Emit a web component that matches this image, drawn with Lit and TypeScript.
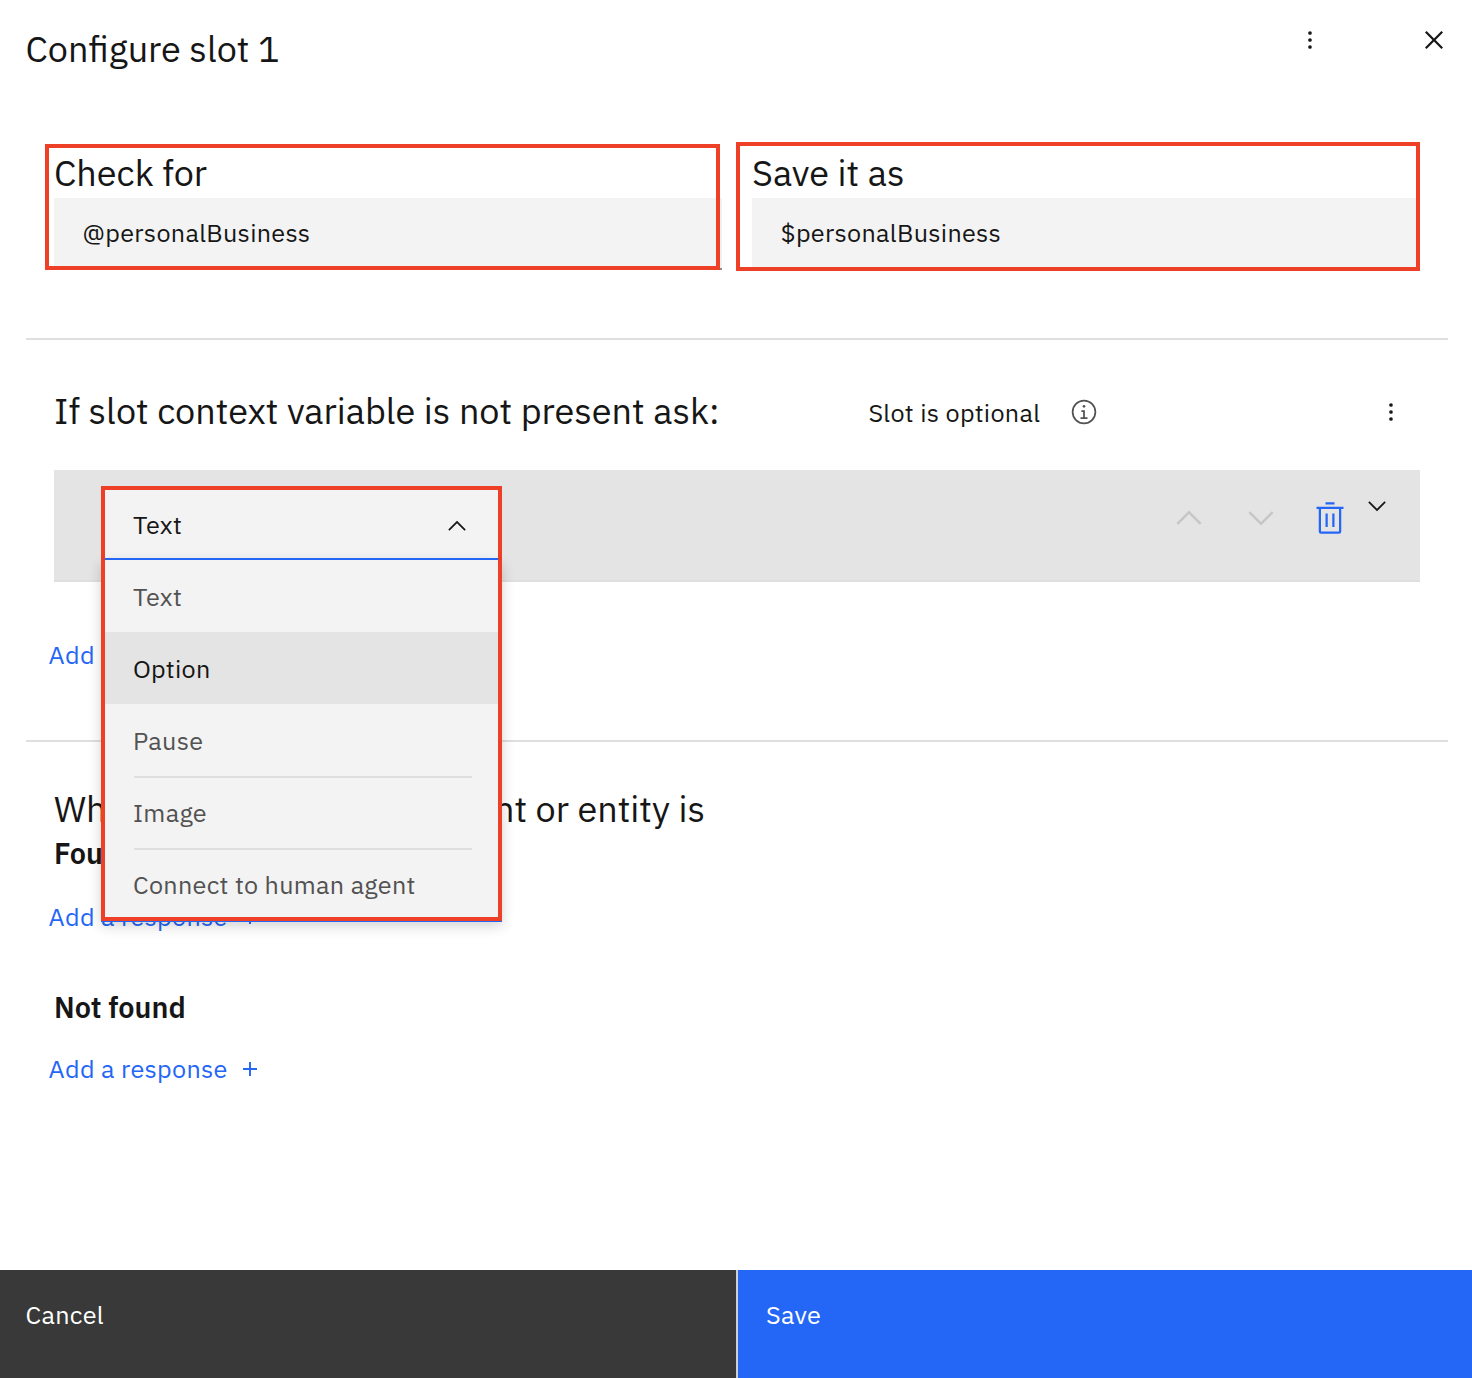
import { LitElement, html, css, svg } from "lit";
import { customElement, property } from "lit/decorators.js";
import { classMap } from "lit/directives/class-map.js";

const overflowIcon = svg`<svg class="icon" width="28" height="28" viewBox="0 0 32 32">
  <circle cx="16" cy="8" r="2.1"></circle><circle cx="16" cy="16" r="2.1"></circle><circle cx="16" cy="24" r="2.1"></circle>
</svg>`;

const closeIcon = svg`<svg class="icon" width="36" height="36" viewBox="0 0 32 32">
  <path d="M24 9.4L22.6 8 16 14.6 9.4 8 8 9.4 14.6 16 8 22.6 9.4 24 16 17.4 22.6 24 24 22.6 17.4 16z"></path>
</svg>`;

const infoIcon = svg`<svg class="icon info" width="28" height="28" viewBox="0 0 32 32">
  <path d="M17 22L17 14 13 14 13 16 15 16 15 22 12 22 12 24 20 24 20 22 17 22z"></path>
  <circle cx="16" cy="9.5" r="1.5"></circle>
  <path d="M16 30A14 14 0 1 1 30 16 14 14 0 0 1 16 30ZM16 4A12 12 0 1 0 28 16 12 12 0 0 0 16 4Z"></path>
</svg>`;

const trashIcon = svg`<svg class="icon trash" width="36" height="36" viewBox="0 0 32 32">
  <path d="M12 12H14V24H12zM18 12H20V24H18z"></path>
  <path d="M4 6V8H6V28a2 2 0 0 0 2 2H24a2 2 0 0 0 2-2V8h2V6zM8 28V8H24V28zM12 2H20V4H12z"></path>
</svg>`;

const chevronUp = (size: number) => svg`<svg class="icon" width=${size} height=${size} viewBox="0 0 32 32">
  <path d="M16 10L26 20 24.6 21.4 16 12.8 7.4 21.4 6 20z"></path>
</svg>`;

const chevronDown = (size: number) => svg`<svg class="icon" width=${size} height=${size} viewBox="0 0 32 32">
  <path d="M16 22L6 12 7.4 10.6 16 19.2 24.6 10.6 26 12z"></path>
</svg>`;

const plusIcon = svg`<svg class="icon" width="28" height="28" viewBox="0 0 32 32">
  <path d="M17.1 14.9V8H14.9V14.9H8V17.1H14.9V24H17.1V17.1H24V14.9z"></path>
</svg>`;

@customElement("slot-field")
export class SlotField extends LitElement {
  @property() label = "";
  @property() value = "";

  static styles = css`
    :host { display: block; }
    .label { font-size: 36px; line-height: 48px; padding-bottom: 1px; }
    .input {
      box-sizing: border-box; height: 72px; padding: 0 28.6px 2px; display: flex; align-items: center;
      background: #f3f3f3; border-bottom: 2px solid #8d8d8d;
      font-size: 25.2px; letter-spacing: 0.288px;
    }
  `;

  render() {
    return html`<div class="label">${this.label}</div><div class="input">${this.value}</div>`;
  }
}

@customElement("response-type-menu")
export class ResponseTypeMenu extends LitElement {
  options = [
    { name: "Text", active: false, rule: false },
    { name: "Option", active: true, rule: false },
    { name: "Pause", active: false, rule: false },
    { name: "Image", active: false, rule: true },
    { name: "Connect to human agent", active: false, rule: true },
  ];

  static styles = css`
    :host {
      display: block; box-sizing: border-box; width: 401px; height: 436px;
      background: #f3f3f3; border: 4px solid #ee4026; border-bottom: 0;
      font-size: 25.2px; letter-spacing: 0.288px;
    }
    .trigger {
      box-sizing: border-box; height: 70px; padding: 0 27px 0 28px;
      display: flex; align-items: center; justify-content: space-between;
      border-bottom: 2px solid #2466f6;
    }
    .icon { display: block; fill: #161616; margin-top: 3px; }
    .list { height: 357px; background: #f3f3f3; }
    .shadow {
      position: absolute; left: -4px; right: -4px; top: 70px; bottom: 0; z-index: -1;
      box-shadow: 0 4px 12px rgba(0, 0, 0, 0.18);
    }
    .option {
      box-sizing: border-box; height: 72px; padding: 0 26px 0 28px; color: #525252;
    }
    .option.last { height: 69px; }
    .text { box-sizing: border-box; height: 72px; line-height: 73px; border-top: 0 solid #dedede; }
    .ruled .text { border-top-width: 2px; line-height: 69px; margin-left: 1px; text-indent: -1px; }
    .active { background: #e4e4e4; color: #161616; }
    .edge { height: 4px; margin: 0 -4px; background: #ee4026; border-bottom: 1px solid #2466f6; }
  `;

  render() {
    return html`
      <div class="shadow"></div>
      <div class="trigger"><span>Text</span>${chevronUp(28)}</div>
      <div class="list">
        ${this.options.map((o, i) => html`
          <div class=${classMap({ option: true, active: o.active, ruled: o.rule, last: i === this.options.length - 1 })}>
            <div class="text">${o.name}</div>
          </div>`)}
      </div>
      <div class="edge"></div>
    `;
  }
}

@customElement("app-root")
export class AppRoot extends LitElement {
  static styles = css`
    :host {
      display: flex; flex-direction: column; width: 1472px; height: 1378px; overflow: hidden;
      background: #fff; color: #161616;
      font-family: "IBM Plex Sans", Roboto, "Open Sans", sans-serif;
      font-size: 25.2px; letter-spacing: 0.288px;
    }
    .icon { display: block; fill: #161616; }
    .top { height: 149px; padding: 0 20px 0 25.4px; box-sizing: border-box; display: flex; align-items: flex-start; }
    .title { flex: 1; padding-top: 25px; }
    .heading { font-size: 36px; line-height: 48px; letter-spacing: 0; font-weight: 400; margin: 0; white-space: nowrap; }
    .tools { display: flex; align-items: center; gap: 92px; padding-top: 22px; }
    .fields { display: grid; grid-template-columns: 668px 668px; gap: 30px; padding-left: 54px; height: 189px; letter-spacing: 0; }
    .field { position: relative; height: 121px; }
    .mark { position: absolute; box-sizing: border-box; border: 4px solid #ee4026; }
    .mark.left { left: -9px; top: -5px; width: 675px; height: 126px; }
    .mark.right { left: -16px; top: -7px; width: 684px; height: 129px; }
    .rule { height: 2px; margin: 0 24px 0 26px; background: #dfdfdf; }
    .ask { display: flex; align-items: center; height: 130px; padding: 14px 67px 0 54px; box-sizing: border-box; }
    .ask .heading { width: 814.4px; margin-top: -3px; }
    .optional { padding-top: 1px; }
    .ask .info { margin-left: 29.5px; fill: #525252; }
    .ask .more { margin: 0 0 0 auto; }
    .response {
      position: relative; box-sizing: border-box; height: 112px; margin: 0 52px 0 54px; padding: 30px 29px 0 0;
      display: flex; justify-content: flex-end; align-items: flex-start;
      background: #e4e4e4; border-bottom: 2px solid #dfdfdf;
    }
    .move { display: flex; gap: 32px; margin: -2px 31px 0 0; }
    .move .icon { fill: #c6c6c6; }
    .trash { fill: #2466f6; }
    .expand { margin: -8px 0 0 15px; }
    response-type-menu { position: absolute; left: 47px; top: 16px; z-index: 2; }
    .link { display: flex; align-items: center; gap: 8px; height: 36px; padding-left: 48.6px; color: #2466f6; }
    .link .icon { fill: #2466f6; margin-top: 2px; }
    .variation { padding: 54px 0 68px; }
    .when { padding: 43px 0 0 54px; display: flex; }
    .lead { width: 440px; }
    .sub { margin: 0; padding-left: 54px; font-size: 28.8px; line-height: 40px; font-weight: 600; letter-spacing: 0; }
    .found { padding-bottom: 25px; }
    .missing { padding-top: 53px; padding-bottom: 23px; }
    .actions { margin-top: auto; display: grid; grid-template-columns: 736px 734px; gap: 2px; height: 108px; background: #cfcfcf; color: #fff; }
    .action { padding: 26px 25.6px 0; line-height: 38px; }
    .cancel { background: #393939; }
    .save { background: #2466f6; padding-left: 28px; }
  `;

  render() {
    return html`
      <div class="top">
        <div class="title"><h1 class="heading">Configure slot 1</h1></div>
        <div class="tools">${overflowIcon}${closeIcon}</div>
      </div>
      <div class="fields">
        <div class="field">
          <slot-field label="Check for" value="@personalBusiness"></slot-field>
          <div class="mark left"></div>
        </div>
        <div class="field">
          <slot-field label="Save it as" value="$personalBusiness"></slot-field>
          <div class="mark right"></div>
        </div>
      </div>
      <div class="rule"></div>
      <div class="ask">
        <h2 class="heading">If slot context variable is not present ask:</h2>
        <span class="optional">Slot is optional</span>
        ${infoIcon}
        <div class="more">${overflowIcon}</div>
      </div>
      <div class="response">
        <div class="move">${chevronUp(40)}${chevronDown(40)}</div>
        ${trashIcon}
        <div class="expand">${chevronDown(28)}</div>
        <response-type-menu></response-type-menu>
      </div>
      <div class="variation"><div class="link">Add</div></div>
      <div class="rule"></div>
      <div class="when heading"><span class="lead">Wh</span><span>nt or entity is</span></div>
      <h3 class="sub found">Found</h3>
      <div class="link">Add a response ${plusIcon}</div>
      <h3 class="sub missing">Not found</h3>
      <div class="link">Add a response ${plusIcon}</div>
      <div class="actions">
        <div class="action cancel">Cancel</div>
        <div class="action save">Save</div>
      </div>
    `;
  }
}
